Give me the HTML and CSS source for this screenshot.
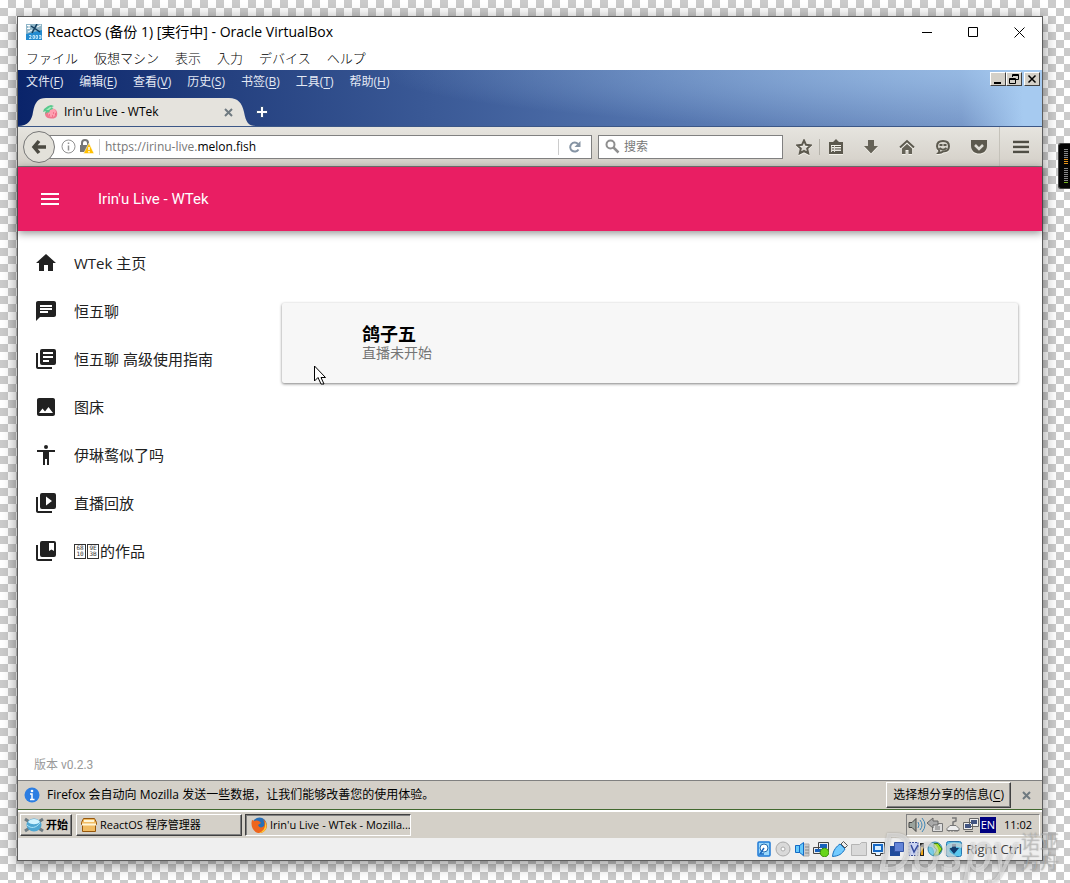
FILE: index.html
```
<!DOCTYPE html>
<html lang="zh-CN">
<head>
<meta charset="utf-8">
<title>Irin'u Live - WTek</title>
<link rel="stylesheet" href="styles.css">
</head>
<body>
<div class="window">
  <header class="vm-title">
    <svg class="vm-icon" viewBox="0 0 16 16"><path fill="#238bd0" d="M0 0h16v16H0z"/><path fill="#8fb6c9" d="M0 0h16v6L0 10z"/><path d="M5 2l9 6M11 0L6 9" stroke="#103b5c" stroke-width="1.500"/><path d="M1 1.500h3M1 4.500h3M2 3h2M11 3l4-2M2 8l4-2" stroke="#fff"/><path d="M3 11.500h2v1.500l-2 1.500h2.500M7 11.500h1.500v3H7zM10 11.500h1.500v3H10zM13 11.500h2v1.500h-2M15 13v1.500h-2" fill="none" stroke="#d9f4ff" stroke-width=".8"/></svg>
    <h1>ReactOS (备份 1) [実行中] - Oracle VirtualBox</h1>
    <div class="win-buttons">
      <button aria-label="最小化"><svg viewBox="0 0 11 11"><path d="M0 5.500h10"/></svg></button>
      <button aria-label="最大化"><svg viewBox="0 0 11 11"><path d="M.5 .5h9v9h-9z"/></svg></button>
      <button aria-label="閉じる"><svg viewBox="0 0 11 11"><path d="M.5 .5l10 10M10.500 .5l-10 10"/></svg></button>
    </div>
  </header>
  <nav class="vm-menu" lang="ja">
    <button>ファイル</button><button>仮想マシン</button><button>表示</button><button>入力</button><button>デバイス</button><button>ヘルプ</button>
  </nav>

  <section class="firefox">
    <div class="fx-top">
      <nav class="fx-menu">
        <button>文件(<u>F</u>)</button><button>编辑(<u>E</u>)</button><button>查看(<u>V</u>)</button><button>历史(<u>S</u>)</button><button>书签(<u>B</u>)</button><button>工具(<u>T</u>)</button><button>帮助(<u>H</u>)</button>
      </nav>
      <div class="classic-buttons">
        <button aria-label="最小化"><svg viewBox="0 0 10 10"><path fill="#000" d="M1 8h7v2H1z"/></svg></button>
        <button aria-label="还原"><svg viewBox="0 0 10 10"><path d="M3.500 3V.5h6v5H7M3 1.500h7M.5 4.500h6v5h-6zM0 5.500h7" fill="none" stroke="#000"/></svg></button>
        <button class="apart" aria-label="关闭"><svg viewBox="0 0 10 10"><path d="M1.500 1.500l7 7M8.500 1.500l-7 7" stroke="#000" stroke-width="1.500"/></svg></button>
      </div>
      <div class="tabs">
        <div class="tab">
          <svg class="tab-shape" viewBox="0 0 238 28" preserveAspectRatio="none"><path fill="#e5e3dd" d="M0 28C10 28 14 22 15 14C17 4 20 0 28 0H211C220 0 224 5 226 14C228 24 230 28 238 28z"/></svg>
          <svg class="favicon" viewBox="0 0 15 15"><path fill="#f0788f" d="M3 6C0 10 4 14 8.500 13.500 13 14 15 11 14 7s-6-5-11-1z"/><path fill="#ff9fb0" d="M5 8c0 3 2 4 4 4s4-2 4-5-3-4-5-3z"/><path d="M6 10h1M9 11h1M10 8h1M12 9h1" stroke="#e14a6a"/><path fill="#58c88d" d="M1 4L0 7l3-1-1 3 3-2 1 1 1-3 3-1-1-2 2-1-3-1-3 1z"/><path fill="#a0edba" d="M3 5l4-3 2 0-3 3z"/></svg>
          <span class="tab-name">Irin'u Live - WTek</span>
          <button class="cross" aria-label="关闭标签页"><svg viewBox="0 0 9 9"><path d="M1 1l7 7M8 1l-7 7"/></svg></button>
        </div>
        <button class="new-tab" aria-label="新标签页"><svg viewBox="0 0 12 12"><path d="M6 0v12M0 6h12" stroke="#35507f" stroke-width="4"/><path d="M6 1v10M1 6h10" stroke="#fff" stroke-width="2"/></svg></button>
      </div>
    </div>

    <div class="toolbar">
      <button class="back" aria-label="后退"><svg viewBox="0 0 16 16"><path d="M8 2L3 8l5 6M3 8h12" fill="none" stroke="#4c4a42" stroke-width="3.500"/></svg></button>
      <div class="url-box">
        <svg class="i15" viewBox="0 0 15 15"><circle cx="7.500" cy="7.500" r="6.500" fill="none" stroke="#929292"/><path d="M7.500 6.500v5M7.500 3.500v1.500" stroke="#929292" stroke-width="1.500"/></svg>
        <svg class="i15" viewBox="0 0 15 15"><path d="M3 7V4a3 3 0 0 1 6 0v3" fill="none" stroke="#777" stroke-width="2"/><path fill="#777" d="M1 6h10v7H1z"/><path fill="#ffbf00" stroke="#fff" stroke-width=".5" d="M10 4l5 10.500H4.500z"/><path d="M10 8v3M10 12v1.500" stroke="#fff" stroke-width="1.500"/></svg>
        <label class="url-text" aria-label="网址"><span>https://irinu-live.</span>melon.fish</label>
        <button class="reload" aria-label="刷新"><svg viewBox="0 0 12 12"><path d="M9.500 8.500A4.500 4.500 0 1 1 9 3" fill="none" stroke="#8694a4" stroke-width="2"/><path fill="#8694a4" d="M11.500 0v6h-6z"/></svg></button>
      </div>
      <label class="search-box">
        <svg class="i15" viewBox="0 0 15 15"><circle cx="5.500" cy="5.500" r="4" fill="none" stroke="#8f8f8f" stroke-width="2"/><path d="M8.500 8.500l5 5" stroke="#8f8f8f" stroke-width="2.500"/></svg>
        <input type="search" placeholder="搜索" aria-label="搜索">
      </label>
      <div class="tools">
        <button aria-label="收藏"><svg viewBox="0 0 16 16"><path d="M8 1.500l2 4.300 4.700.5-3.500 3.200 1 4.800L8 12l-4.200 2.300 1-4.800L1.300 6.300 6 5.800z" fill="none" stroke="#5c594e" stroke-width="2"/></svg></button>
        <button class="ruled" aria-label="书签"><svg viewBox="0 0 16 16"><path d="M2 4h12v10H2z" fill="none" stroke="#5c594e" stroke-width="2"/><path fill="#5c594e" d="M5 3l3-3 3 3v2H5zM2 4h12v2H2z"/><path d="M4 7.500h2M7 7.500h6M4 10h2M7 10h6M4 12.500h2M7 12.500h6" stroke="#5c594e"/></svg></button>
        <button aria-label="下载"><svg viewBox="0 0 16 16"><path fill="#656257" d="M5 1h6v6h4l-7 7.500L1 7h4z"/></svg></button>
        <button aria-label="主页"><svg viewBox="0 0 16 16"><path d="M1 8.500L8 2l7 6.500" fill="none" stroke="#5c594e" stroke-width="2"/><path fill="#656257" d="M3 9.500l5-4.500 5 4.500V15H9.500v-4h-3v4H3z"/></svg></button>
        <button aria-label="聊天"><svg viewBox="0 0 16 16"><path fill="#d9d6ce" stroke="#5c594e" stroke-width="2" d="M8 2c4 0 6 2 6 5.300S12 12.500 8 12.500c-1 1-2.500 1.500-4.500 1.500 1-1 1-2 .5-3-1.500-1-2-2.300-2-3.700C2 4 4 2 8 2z"/><path d="M4.500 6h3M8.500 6h3M4.500 9c2 2 5 2 7 0" fill="none" stroke="#5c594e" stroke-width="1.800"/></svg></button>
        <button aria-label="Pocket"><svg viewBox="0 0 16 16"><path fill="#5c594e" d="M0 1h16v6c0 10-16 10-16 0z"/><path d="M4 6l4 4 4-4" fill="none" stroke="#dfddd6" stroke-width="2.500"/></svg></button>
        <button class="app-menu" aria-label="菜单"><svg viewBox="0 0 16 14"><path d="M0 2h16M0 7h16M0 12h16" stroke="#504e45" stroke-width="2.500"/></svg></button>
      </div>
    </div>

    <div class="page">
      <header class="app-bar">
        <button aria-label="导航"><svg viewBox="0 0 24 24"><path d="M3 18h18v-2H3v2zm0-5h18v-2H3v2zm0-7v2h18V6H3z"/></svg></button>
        <h2>Irin'u Live - WTek</h2>
      </header>
      <div class="page-body">
        <aside>
          <nav class="side">
            <a href="#"><svg viewBox="0 0 24 24"><path d="M10 20v-6h4v6h5v-8h3L12 3 2 12h3v8z"/></svg>WTek 主页</a>
            <a href="#"><svg viewBox="0 0 24 24"><path d="M20 2H4c-1.100 0-2 .9-2 2v18l4-4h14c1.100 0 2-.9 2-2V4c0-1.100-.9-2-2-2zM6 6h12v2H6zm0 3h12v2H6zm8 5H6v-2h8z"/></svg>恒五聊</a>
            <a href="#"><svg viewBox="0 0 24 24"><path d="M4 6H2v14c0 1.100.9 2 2 2h14v-2H4zM20 2H8a2 2 0 0 0-2 2v12a2 2 0 0 0 2 2h12a2 2 0 0 0 2-2V4a2 2 0 0 0-2-2zM9 5h10v2H9zm0 4h10v2H9zm0 4h6v2H9z"/></svg>恒五聊 高级使用指南</a>
            <a href="#"><svg viewBox="0 0 24 24"><path d="M21 19V5c0-1.100-.9-2-2-2H5c-1.100 0-2 .9-2 2v14c0 1.100.9 2 2 2h14c1.100 0 2-.9 2-2zM8.500 13.500l2.500 3.010L14.500 12l4.500 6H5z"/></svg>图床</a>
            <a href="#"><svg viewBox="0 0 24 24"><path d="M12 2a2 2 0 1 1 0 4 2 2 0 0 1 0-4zm9 7h-6v13h-2v-6h-2v6H9V9H3V7h18z"/></svg>伊琳鹜似了吗</a>
            <a href="#"><svg viewBox="0 0 24 24"><path d="M4 6H2v14c0 1.100.9 2 2 2h14v-2H4zM20 2H8a2 2 0 0 0-2 2v12a2 2 0 0 0 2 2h12a2 2 0 0 0 2-2V4a2 2 0 0 0-2-2zm-8 12.500v-9l6 4.500z"/></svg>直播回放</a>
            <a href="#"><svg viewBox="0 0 24 24"><path d="M4 6H2v14c0 1.100.9 2 2 2h14v-2H4zM20 2H8a2 2 0 0 0-2 2v12a2 2 0 0 0 2 2h12a2 2 0 0 0 2-2V4a2 2 0 0 0-2-2zm0 10l-2.500-1.500L15 12V4h5z"/></svg><span class="hexbox">68<br>10</span><span class="hexbox">9E<br>3B</span>的作品</a>
          </nav>
          <p class="version">版本 v0.2.3</p>
        </aside>
        <main>
          <article class="card">
            <h3>鸽子五</h3>
            <p>直播未开始</p>
            <svg class="cursor" viewBox="0 0 12 20"><path fill="#fff" stroke="#000" d="M.5 1v15l3.500-3.500 3 6.500h3l-3-6.500h4.500z"/></svg>
          </article>
        </main>
      </div>
    </div>

    <div class="notice">
      <svg class="info" viewBox="0 0 16 16"><circle cx="8" cy="8" r="7.500" fill="#2c7ee2"/><path d="M6 7h2v5M6 12.500h4.500" fill="none" stroke="#fff" stroke-width="1.500"/><circle cx="8" cy="4" r="1.300" fill="#fff"/></svg>
      <span>Firefox 会自动向 Mozilla 发送一些数据，让我们能够改善您的使用体验。</span>
      <button class="raised share">选择想分享的信息(<u>C</u>)</button>
      <button class="cross" aria-label="关闭"><svg viewBox="0 0 9 9"><path d="M1 1l7 7M8 1l-7 7"/></svg></button>
    </div>
  </section>

  <footer class="taskbar">
    <button class="raised start"><svg viewBox="0 0 20 16"><path d="M1 2l18 12M19 2L1 14" stroke="#6d7b82" stroke-width="3"/><ellipse cx="10" cy="8" rx="7.500" ry="6.500" fill="#4ea6d2"/><path fill="#d1f3ff" d="M4 5c2-4 10-4 12 0-3 3-9 3-12 0z"/><path d="M3 8c4 4 9 3 13-2" fill="none" stroke="#a8e2f8"/></svg>开始</button>
    <button class="raised task"><svg viewBox="0 0 16 16"><path fill="#f0bb62" stroke="#96570b" d="M2.500 1.500h11l2 4v2h-1v7h-13v-7h-1v-2z"/><path d="M3 4h10M1 7.500h14" stroke="#fff6d8" stroke-width="2"/></svg><span>ReactOS 程序管理器</span></button>
    <button class="raised task pressed"><svg viewBox="0 0 16 16"><circle cx="8.500" cy="7.500" r="7" fill="#2870b8"/><path fill="#ee651d" d="M1 3l3 1c2-1 5 0 6 2L7 8c1 3 4 3 6 1 1-3 0-5-1-7 6 4 5 12-2 14C3 17-1 10 1 3z"/><path fill="#ffca35" d="M14 4c4 7-1 12-6 12 5-2 7-6 6-12z"/></svg><span>Irin'u Live - WTek - Mozilla...</span></button>
    <div class="tray">
      <svg viewBox="0 0 18 16"><path fill="#9aa39d" stroke="#444" d="M1 5.500h3l4-4v13l-4-4H1z"/><path d="M10 5q2 3 0 6M12 3q4 5 0 10M14 1q6 7 0 14" fill="none" stroke="#3f86b7"/></svg>
      <svg viewBox="0 0 18 16"><path fill="#ddd" stroke="#777" d="M6.500 6.500h10v8h-10z"/><path fill="#aaa" stroke="#666" d="M1 6l6-5v3h5v4H7v3z"/><path d="M9 10h5M9 12h5" stroke="#777"/></svg>
      <svg viewBox="0 0 18 16"><path fill="#eee" stroke="#777" d="M6 8.500h6l3 3v2H3v-2zM5 13v2M8 13v2M11 13v2M13 13v2"/><path d="M9 8V5l3-1V1H8" fill="none" stroke="#777" stroke-width="1.500"/></svg>
      <svg viewBox="0 0 18 16"><path fill="#eee" stroke="#666" d="M7.500 1.500h9v8h-9zM1.500 5.500h9v7h-9zM3 14.500h8"/><path fill="#415481" d="M9 3h6v4H9zM3 7h6v4H3z"/></svg>
      <span class="lang">EN</span><time>11:02</time>
    </div>
  </footer>

  <div class="vm-status">
    <svg viewBox="0 0 16 16"><rect x="2" y="1" width="12" height="14" rx="1" fill="#9bd8fc" stroke="#1f7ad6" stroke-width="1.500"/><circle cx="8" cy="7" r="4" fill="#fff" stroke="#246aae"/><path d="M8 7L4 13h4" fill="none" stroke="#1865bd" stroke-width="1.500"/></svg>
    <svg viewBox="0 0 16 16"><circle cx="8" cy="8" r="7" fill="#d9d9d9" stroke="#aaa"/><circle cx="8" cy="8" r="2" fill="#fff" stroke="#aaa"/></svg>
    <svg viewBox="0 0 16 16"><path fill="#ccc" stroke="#aaa" d="M9 3h6v12H9z"/><path d="M11 6h4M11 9h4M11 12h4" stroke="#888"/><path fill="#65c9fb" stroke="#136ac6" d="M1.500 4.500h4l4-3v13l-4-3h-4zM5.500 4v8"/></svg>
    <svg viewBox="0 0 16 16"><path fill="#e7edf4" stroke="#444" d="M5.500 1.500h10v8h-10zM.5 6.500h9v6h-9z"/><path fill="#1761bc" d="M7 3h7v4H7zM2 8h6v3H2z"/><circle cx="11.500" cy="11.500" r="4.300" fill="#67d51a" stroke="#398c0a"/></svg>
    <svg viewBox="0 0 16 16"><path fill="#eee" stroke="#555" d="M9 3l2.500-2.500 4 4L13 7z"/><path fill="#73cbff" stroke="#1971bd" d="M.5 15.500C1 9 5 5 8 3l5 5c-3 5-6 7-12.500 7.500z"/></svg>
    <svg viewBox="0 0 16 16"><path fill="#d9d9d9" stroke="#b5b5b5" d="M.5 14.500v-11h8l2-2h5v13z"/></svg>
    <svg viewBox="0 0 16 16"><path fill="#e5f3ff" stroke="#333" d="M1.500 1.500h13v11h-4v2h-5v-2h-4z"/><path fill="#d6edff" stroke="#1769c6" stroke-width="2" d="M4 4h8v6H4z"/></svg>
    <svg viewBox="0 0 16 16"><path fill="#204b9b" d="M1 5h10v10H1z"/><path fill="#6485d8" stroke="#3353a5" d="M5.500 1.500h9v9h-9z"/></svg>
    <svg viewBox="0 0 16 16"><path fill="#cad4f4" stroke="#394c97" stroke-dasharray="2 1" d="M1 1.500h9v13H1z"/><path d="M3 4l3 7 4-7" fill="none" stroke="#354b9e" stroke-width="1.500"/><path fill="#222" d="M12 2h4v13h-4z"/><path fill="#f6a914" d="M13 6h2v8h-2z"/></svg>
    <svg viewBox="0 0 16 16"><circle cx="8" cy="8" r="7" fill="#79cde6" stroke="#3885ad"/><path fill="#a6e620" stroke="#37820f" d="M7 2.500h4l4 5.500-4 6H7l3-5-3-3z"/></svg>
    <svg viewBox="0 0 16 16"><rect x=".5" y=".5" width="15" height="15" rx="2" fill="#58c7ef" stroke="#2878b0"/><path fill="#123e70" d="M6 3h4v4h3l-5 6-5-6h3z"/></svg>
    <span>Right Ctrl</span>
  </div>
</div>
<div class="meter"><i></i><i></i></div>
<div class="watermark"><span>Dospy</span><small>诺亚<br>方舟</small></div>
</body>
</html>
```
FILE: styles.css
```
* { box-sizing: border-box; }
body {
  margin: 0;
  min-height: 100vh;
  padding: 16px 27px 22px 17px;
  display: flex;
  position: relative;
  overflow-x: hidden;
  color: #000;
  font: 12px/16px "Open Sans", "Noto Sans CJK SC", sans-serif;
  background: conic-gradient(#cbcbcb 25%, #fff 0 50%, #cbcbcb 0 75%, #fff 0) 0 0 / 16px 16px;
}
button { margin: 0; padding: 0; border: 0; background: none; font: inherit; color: inherit; white-space: nowrap; }
button, label, a { display: flex; align-items: center; }
button { justify-content: center; }
h1, h2, h3, p { margin: 0; font-weight: 400; }
u { text-underline-offset: 2px; }
svg { flex: none; display: block; }

.window {
  flex: 1;
  min-width: 0;
  display: flex;
  flex-direction: column;
  border: 1px solid #5c5c5c;
  background: #fff;
  box-shadow: 0 3px 14px rgba(0, 0, 0, .45);
}
.vm-title { height: 30px; display: flex; align-items: center; padding-left: 8px; gap: 5px; }
.vm-icon { width: 16px; height: 16px; }
.vm-title h1 { flex: 1; font-family: "Open Sans", "Noto Sans CJK JP", sans-serif; font-size: 14px; line-height: 20px; }
.win-buttons { display: flex; }
.win-buttons button { width: 46px; height: 28px; }
.win-buttons svg { width: 11px; height: 11px; fill: none; stroke: #000; }
.vm-menu { height: 23px; display: flex; align-items: center; gap: 16px; padding: 0 0 2px 8px; }
.vm-menu button { font: 300 13px/18px "Noto Sans CJK JP", sans-serif; }

.firefox { flex: 1; display: flex; flex-direction: column; }
.fx-top {
  display: grid;
  grid-template-columns: 1fr auto;
  grid-template-rows: 28px 28px;
  background:
    radial-gradient(ellipse 65% 110% at 100% 0, rgba(166, 202, 240, .75), rgba(166, 202, 240, 0)),
    linear-gradient(88deg, #0a246a, #24407f 20%, #3a5996 40%, #5273ad 62%, #7595c6 92%, #a6caf0 98%);
  border-bottom: 1px solid #3c5787;
}
.fx-menu { display: flex; gap: 16px; padding: 0 0 4px 8px; color: #e4e9f4; }
.classic-buttons { display: flex; padding: 2px 2px 0 0; }
.classic-buttons button { width: 16px; height: 14px; background: #d4d0c8; border: 1px solid; border-color: #fff #404040 #404040 #fff; }
.classic-buttons .apart { margin-left: 2px; }
.classic-buttons svg { width: 10px; height: 10px; }
.tabs { grid-column: 1 / -1; display: flex; }
.tab { width: 238px; height: 28px; padding: 0 20px 0 25px; position: relative; display: flex; align-items: center; gap: 6px; }
.tab-shape { position: absolute; inset: 0; width: 100%; height: 100%; }
.favicon { width: 15px; height: 15px; position: relative; }
.tab-name { flex: 1; position: relative; }
.cross { position: relative; width: 16px; height: 16px; }
.cross svg { width: 9px; height: 9px; stroke: #6f7a80; stroke-width: 2; }
.new-tab { width: 12px; }
.new-tab svg { width: 12px; height: 12px; }

.toolbar {
  height: 40px;
  display: flex;
  align-items: center;
  padding-left: 5px;
  background: linear-gradient(#e6e4df, #d4d0c8);
  border-bottom: 1px solid #777;
}
.back { flex: none; width: 32px; height: 32px; border: 1px solid #777; border-radius: 50%; background: #e3e1da; z-index: 1; }
.back svg { width: 16px; height: 16px; }
.url-box, .search-box { height: 24px; background: #fff; border: 1px solid #808080; display: flex; align-items: center; }
.url-box { flex: 1; margin-left: -6px; padding-left: 11px; gap: 3px; }
.i15 { width: 15px; height: 15px; }
.url-text { flex: 1; height: 16px; margin-left: 2px; padding-left: 5px; border-left: 1px solid #ccc; }
.url-text span { color: #777; }
.reload { width: 33px; height: 16px; border-left: 1px solid #ccc; }
.reload svg { width: 12px; height: 12px; }
.search-box { width: 185px; margin: 0 4px 0 6px; padding-left: 6px; gap: 4px; }
.search-box input { width: 100%; min-width: 0; border: 0; padding: 0; outline: 0; background: none; font: inherit; }
.search-box input::placeholder { color: #777; }
.tools { display: flex; align-items: center; }
.tools button { width: 36px; height: 39px; }
.tools button:first-child { width: 34px; }
.tools svg { width: 16px; height: 16px; filter: drop-shadow(0 1px 0 #f4f2eb); }
.tools .ruled { width: 32px; height: 16px; border-left: 1px solid #b5b2aa; margin: 0 2px 0 -2px; }
.tools .app-menu { width: 43px; border-left: 1px solid #c5c2ba; margin-left: 2px; }

.page { flex: 1; display: flex; flex-direction: column; background: #fff; }
.app-bar {
  height: 64px;
  padding-left: 20px;
  display: flex;
  align-items: center;
  gap: 36px;
  color: #fff;
  background: #e91e63;
  box-shadow: 0 2px 8px rgba(0, 0, 0, .45);
  z-index: 1;
}
.app-bar svg { width: 24px; height: 24px; fill: #fff; }
.app-bar h2 { font: 15px/20px Roboto, sans-serif; }
.page-body { flex: 1; display: flex; }
aside { width: 240px; display: flex; flex-direction: column; padding-top: 8px; }
.side a { height: 48px; padding-left: 16px; color: #212121; text-decoration: none; font-size: 15px; line-height: 20px; white-space: pre; }
.side svg { width: 24px; height: 24px; margin-right: 16px; fill: #212121; }
.hexbox { width: 12px; height: 15px; margin-right: 1px; border: 1px solid #333; font: 6px/6px "DejaVu Sans Mono", monospace; text-align: center; color: #333; }
.version { margin-top: auto; padding: 0 16px 7px; color: #999; font-family: Roboto, "Noto Sans CJK SC", sans-serif; }
main { flex: 1; padding: 72px 24px 0; }
.card { position: relative; height: 80px; padding: 20px 80px; background: #f7f7f7; border-radius: 2px; box-shadow: 0 1px 3px rgba(0, 0, 0, .5); }
.card h3 { font-size: 18px; line-height: 22px; font-weight: 700; }
.card p { color: #757575; font-size: 14px; line-height: 16px; }
.cursor { position: absolute; left: 32px; top: 62px; width: 12px; height: 20px; }

.notice { height: 29px; display: flex; align-items: center; padding: 0 8px 0 6px; gap: 7px; background: #d4d0c8; border-top: 1px solid #808080; }
.notice > span { flex: 1; }
.info { width: 16px; height: 16px; }
.raised { background: #d4d0c8; border: 1px solid; border-color: #fff #404040 #404040 #fff; box-shadow: inset -1px -1px 0 #808080; }
.share { height: 26px; padding: 0 6px; }

.taskbar { height: 29px; display: flex; align-items: center; gap: 3px; padding: 2px; background: #d4d0c8; border-top: 1px solid #42692f; box-shadow: inset 0 2px 0 #fff; }
.taskbar .raised { height: 22px; margin-top: 2px; }
.taskbar .start { width: 52px; font-weight: 700; margin-right: 1px; font-size: 11px; gap: 2px; }
.start svg { width: 20px; height: 16px; }
.taskbar .task { width: 166px; padding: 0 4px; gap: 3px; justify-content: flex-start; font-size: 11px; overflow: hidden; }
.task svg { width: 16px; height: 16px; }
.taskbar .pressed { padding-left: 5px; border-color: #404040 #fff #fff #404040; box-shadow: inset 1px 1px 0 #808080; }
.tray { height: 22px; margin: 2px 0 0 auto; padding: 0 7px 0 1px; display: flex; align-items: center; border: 1px solid; border-color: #808080 #fff #fff #808080; }
.tray svg { width: 18px; height: 16px; }
.lang { width: 16px; margin-right: 8px; color: #fff; background: #000080; font-size: 11px; text-align: center; }
.tray time { font-size: 11px; }

.vm-status { height: 22px; display: flex; align-items: center; justify-content: flex-end; gap: 3px; padding-right: 20px; background: #efefef; }
.vm-status svg { width: 16px; height: 16px; }
.vm-status span { margin-left: 1px; color: #444; font: 13px/18px "Open Sans", sans-serif; white-space: nowrap; }

.meter { position: absolute; right: 0; top: 143px; width: 12px; height: 46px; padding: 5px 0 0 5px; border: 1px solid #444; border-right: 0; border-radius: 3px 0 0 3px; background: #050505; display: grid; gap: 3px; align-content: start; }
.meter i { width: 4px; height: 16px; }
.meter i:first-child { background: repeating-linear-gradient(transparent 0 1px, #050505 1px 2px), linear-gradient(#888 60%, #e8951a 60%); }
.meter i:last-child { background: repeating-linear-gradient(transparent 0 1px, #050505 1px 2px), linear-gradient(#888 85%, #72b51c 85%); }
.watermark { position: absolute; right: 11px; bottom: 8px; display: flex; align-items: center; gap: 4px; color: rgba(255, 255, 255, .5); text-shadow: 0 0 2px rgba(90, 90, 90, .45); pointer-events: none; }
.watermark span { font: italic 52px/48px "Noto Sans", sans-serif; }
.watermark small { color: rgba(235, 235, 235, .4); font: 19px/20px "Noto Sans CJK SC", sans-serif; text-shadow: 0 0 1px rgba(70, 70, 70, .5); }
```
